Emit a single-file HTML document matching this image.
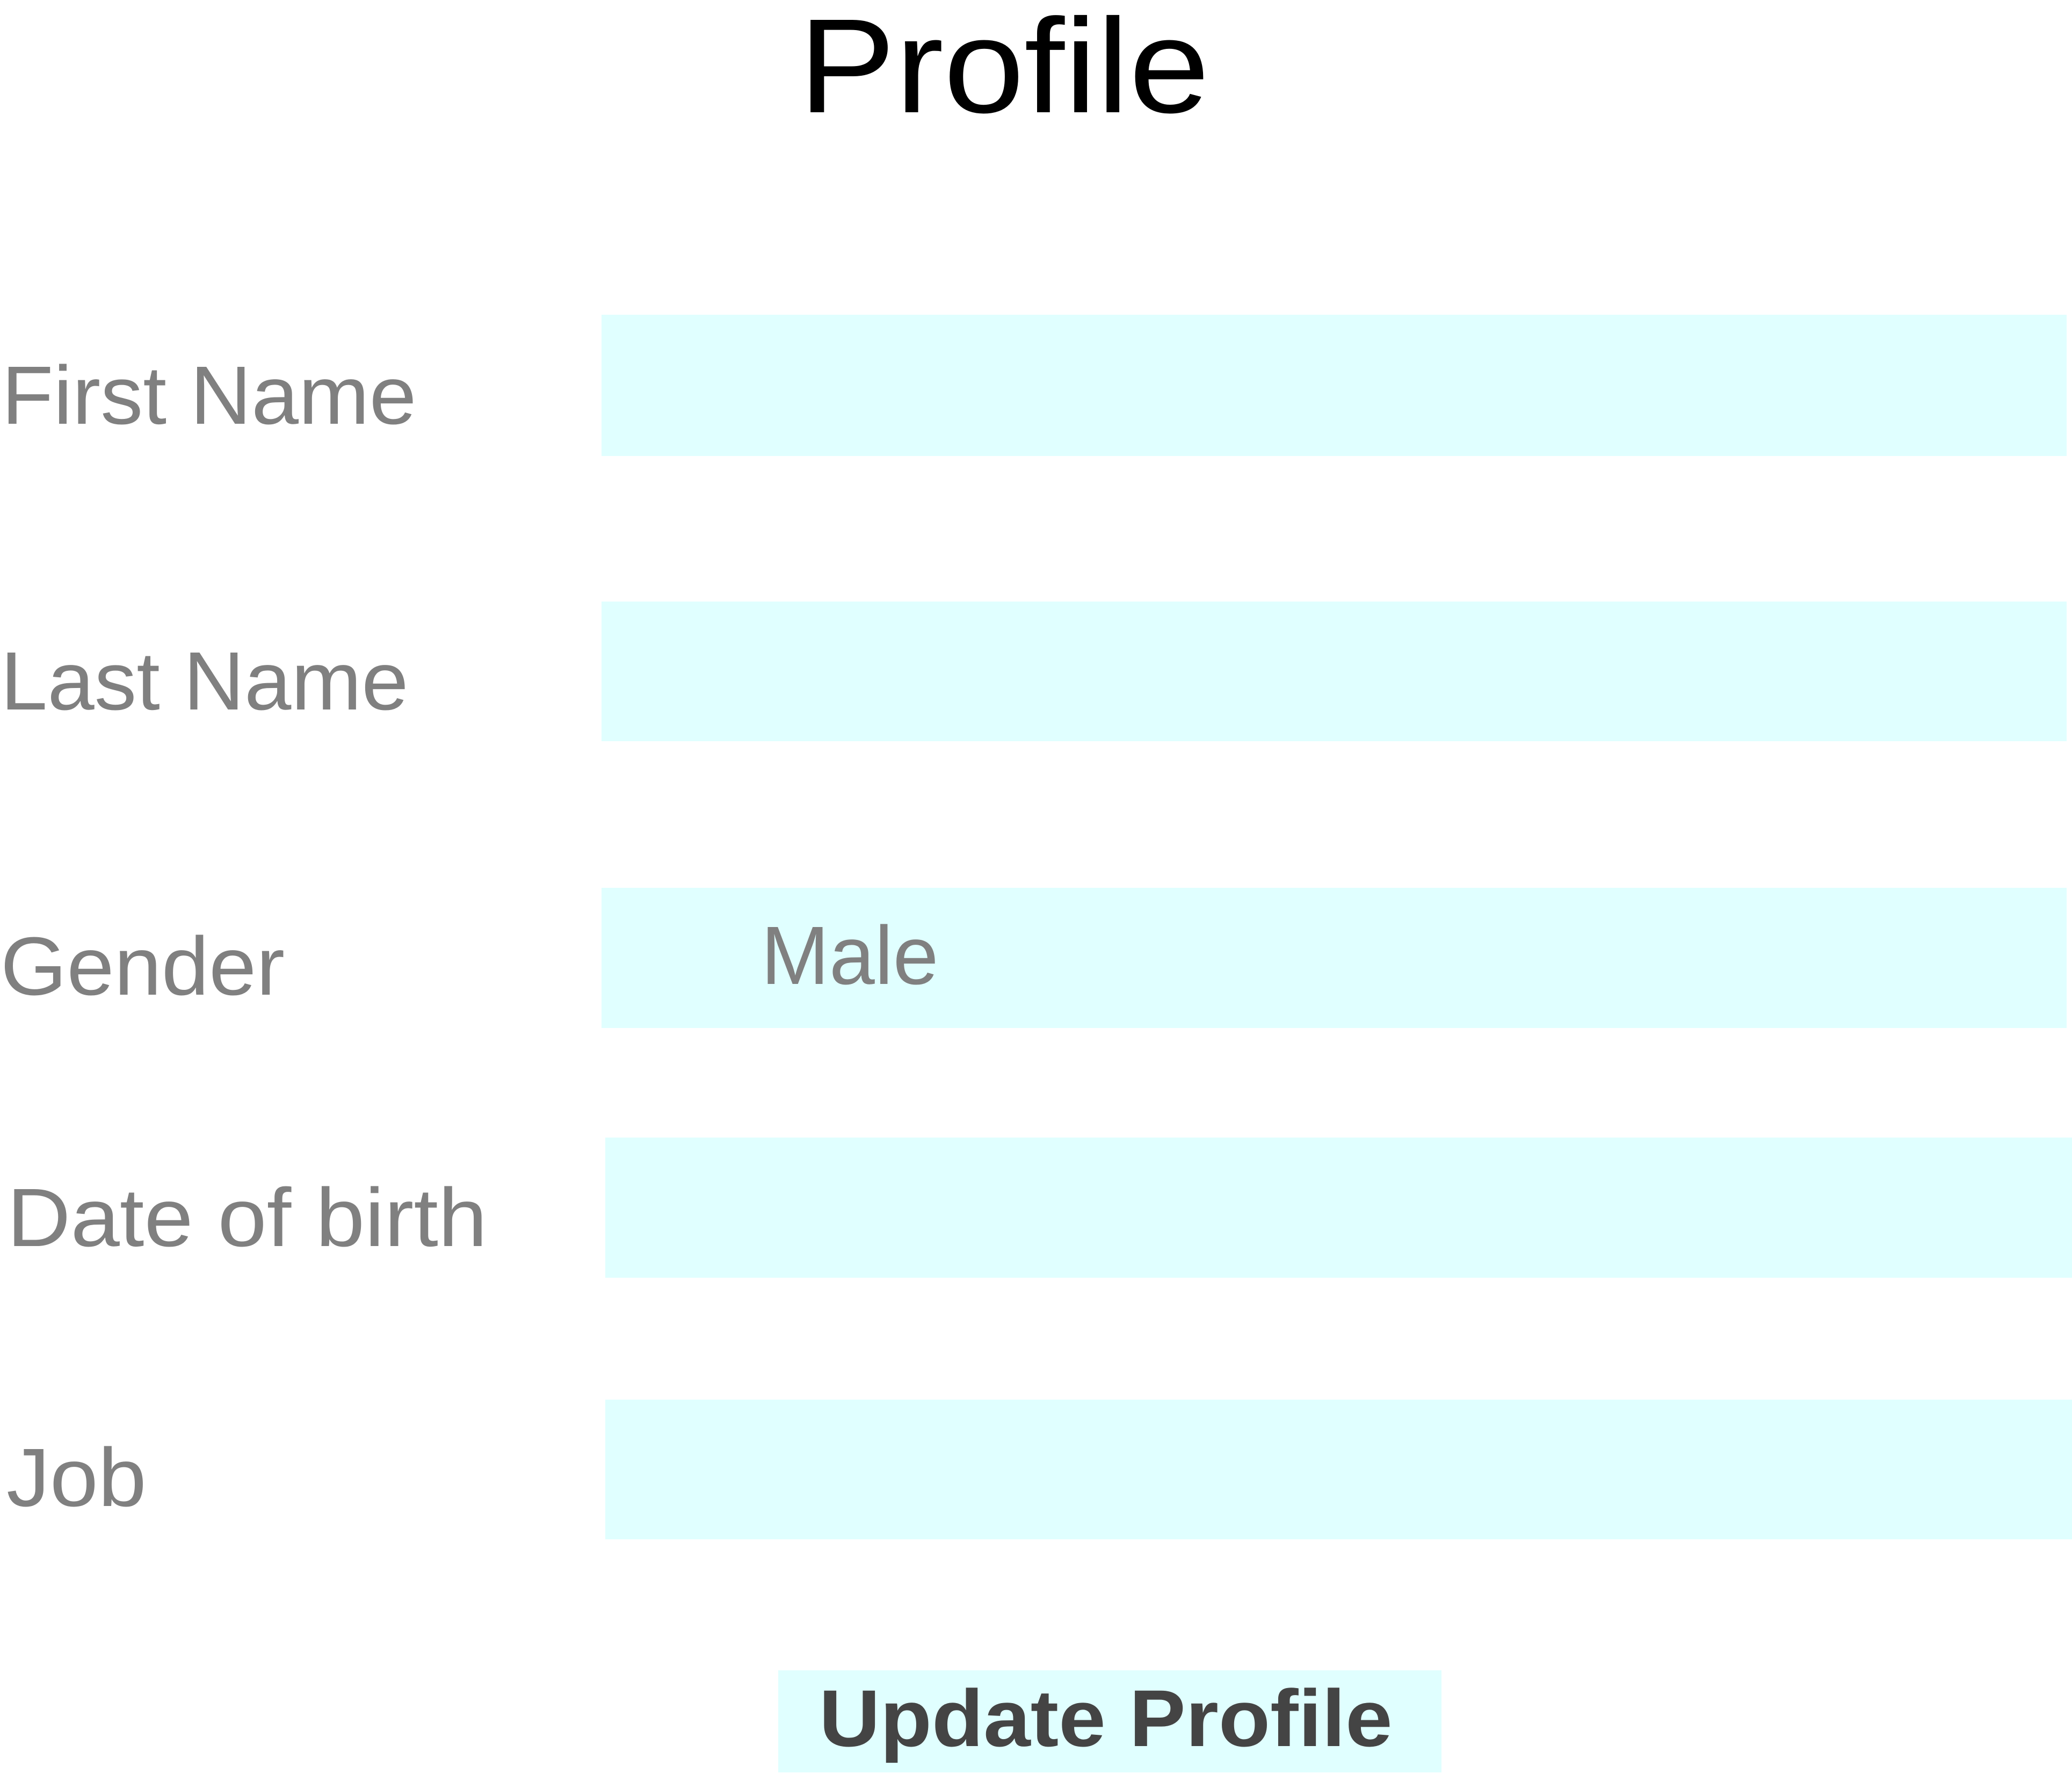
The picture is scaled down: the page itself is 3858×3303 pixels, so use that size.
<!DOCTYPE html>
<html><head><meta charset="utf-8"><style>
html,body{margin:0;padding:0;background:#fff;}
body{width:3858px;height:3303px;position:relative;overflow:hidden;font-family:"Liberation Sans",sans-serif;}
.t{position:absolute;white-space:nowrap;line-height:1;transform-origin:0 0;}
.lab{font-size:154px;color:#808080;}
.box{position:absolute;background:#e0ffff;}
</style></head><body>
<div class="t" style="left:1487px;top:-2px;font-size:250px;color:#000;transform:scaleX(1.08);">Profile</div>

<div class="box" style="left:1120px;top:586px;width:2728px;height:263px;"></div>
<div class="box" style="left:1120px;top:1120px;width:2728px;height:260px;"></div>
<div class="box" style="left:1120px;top:1653px;width:2728px;height:261px;"></div>
<div class="box" style="left:1127px;top:2118px;width:2731px;height:261px;"></div>
<div class="box" style="left:1127px;top:2606px;width:2731px;height:260px;"></div>

<div class="t lab" style="left:3px;top:659px;transform:scaleX(1.026);">First Name</div>
<div class="t lab" style="left:1px;top:1191px;transform:scaleX(1.02);">Last Name</div>
<div class="t lab" style="left:1px;top:1722px;transform:scaleX(1.03);">Gender</div>
<div class="t lab" style="left:13px;top:2190px;transform:scaleX(1.066);">Date of birth</div>
<div class="t lab" style="left:12px;top:2674px;transform:scaleX(1.05);">Job</div>
<div class="t lab" style="left:1417px;top:1702px;transform:scaleX(0.99);">Male</div>

<div class="box" style="left:1449px;top:3110px;width:1235px;height:190px;"></div>
<div class="t" style="left:1525px;top:3124px;font-size:150px;font-weight:bold;color:#444;transform:scaleX(1.05);">Update Profile</div>
</body></html>
